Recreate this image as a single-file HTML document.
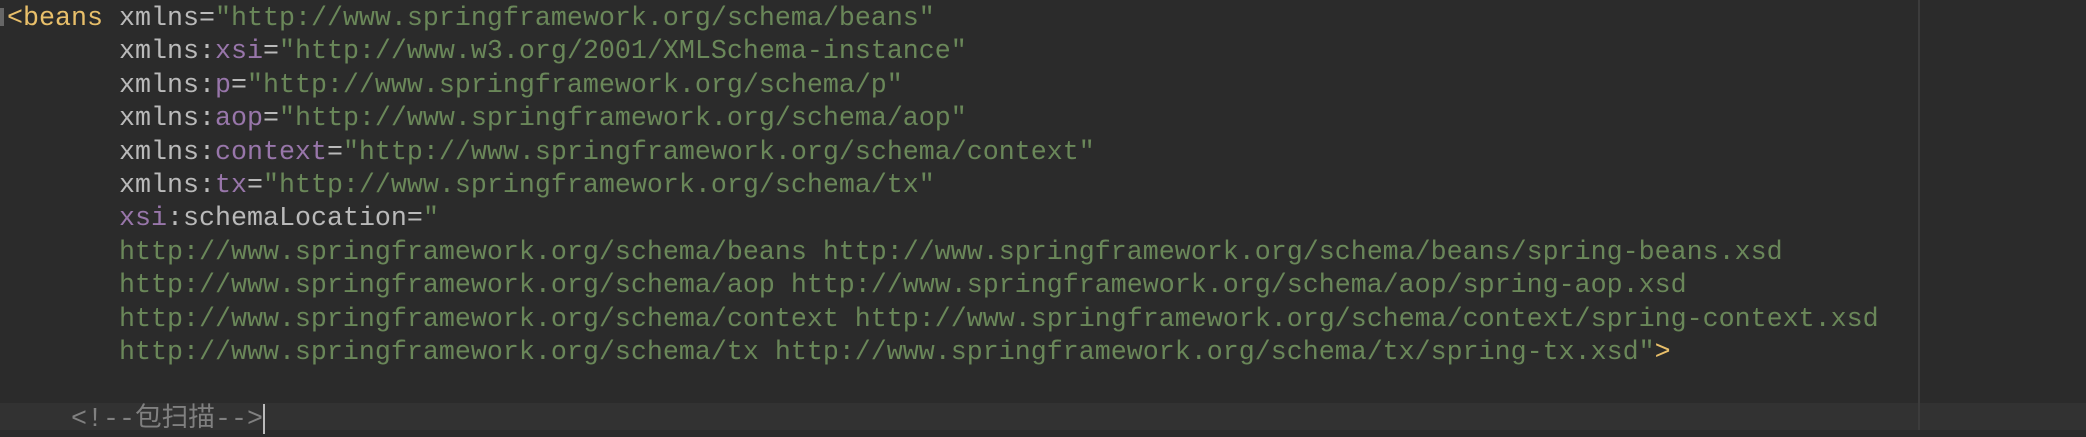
<!DOCTYPE html>
<html><head><meta charset="utf-8"><style>
html,body{margin:0;padding:0;}
body{width:2086px;height:430px;background:#2b2b2b;overflow:hidden;position:relative;font-family:"Liberation Mono","Noto Sans CJK SC",monospace;font-size:26.67px;}
.cur{position:absolute;left:0;top:403px;width:2086px;height:27px;background:#323232;}
.vl{position:absolute;left:1918px;top:0;width:2px;height:430px;background:#3c3c3c;}
pre{position:absolute;left:7px;top:3px;margin:0;font:inherit;line-height:33.4px;color:#bababa;white-space:pre;}
.t{color:#e8bf6a}.v{color:#6a8759}.n{color:#9876aa}.c{color:#808080}
.caret{display:inline-block;width:2px;height:30px;background:#bbb;vertical-align:middle;}
.mark{position:absolute;left:0;top:8px;width:4px;height:18px;background:#666;}
</style></head><body>
<div class="cur"></div><div class="vl"></div><div class="mark"></div>
<pre><span class="t">&lt;beans</span> xmlns=<span class="v">"http://www.springframework.org/schema/beans"</span>
       xmlns:<span class="n">xsi</span>=<span class="v">"http://www.w3.org/2001/XMLSchema-instance"</span>
       xmlns:<span class="n">p</span>=<span class="v">"http://www.springframework.org/schema/p"</span>
       xmlns:<span class="n">aop</span>=<span class="v">"http://www.springframework.org/schema/aop"</span>
       xmlns:<span class="n">context</span>=<span class="v">"http://www.springframework.org/schema/context"</span>
       xmlns:<span class="n">tx</span>=<span class="v">"http://www.springframework.org/schema/tx"</span>
       <span class="n">xsi</span>:schemaLocation=<span class="v">"</span>
<span class="v">       http://www.springframework.org/schema/beans http://www.springframework.org/schema/beans/spring-beans.xsd</span>
<span class="v">       http://www.springframework.org/schema/aop http://www.springframework.org/schema/aop/spring-aop.xsd</span>
<span class="v">       http://www.springframework.org/schema/context http://www.springframework.org/schema/context/spring-context.xsd</span>
<span class="v">       http://www.springframework.org/schema/tx http://www.springframework.org/schema/tx/spring-tx.xsd"</span><span class="t">&gt;</span>

    <span class="c">&lt;!--包扫描--&gt;</span><span class="caret"></span></pre>
</body></html>
